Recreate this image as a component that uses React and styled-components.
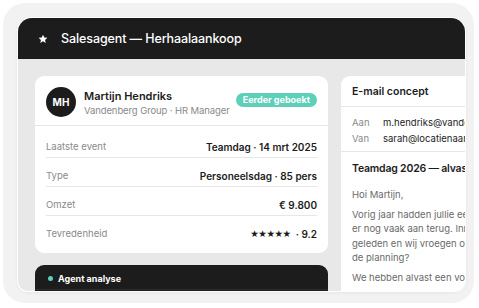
import React from "react";
import styled, { createGlobalStyle } from "styled-components";

const Global = createGlobalStyle`
  html, body { margin: 0; padding: 0; background: #ffffff; }
  body { font-family: Inter, "Noto Sans", sans-serif; -webkit-font-smoothing: antialiased; }
  * { box-sizing: border-box; }
`;

const Frame = styled.div`
  margin: 3px;
  width: 471px;
  height: 300px;
  border-radius: 22px;
  background: #f2f2f2;
  padding: 15px 9px 12px 15px;
  display: flex;
`;

const Window = styled.div`
  flex: 1;
  display: flex;
  flex-direction: column;
  border-radius: 14px 14px 10px 10px;
  overflow: hidden;
  background: #e8e8e8;
  box-shadow: 0 0 0 1px #ffffff, 0 1px 4px rgba(0, 0, 0, 0.08);
`;

const Header = styled.div`
  height: 41px;
  flex: none;
  background: #1c1c1c;
  display: flex;
  align-items: center;
  gap: 13px;
  padding-left: 20px;
  color: #ffffff;
`;

const Title = styled.span`
  font-size: 12.5px;
  font-weight: 500;
  letter-spacing: -0.1px;
`;

const Body = styled.div`
  flex: 1;
  display: grid;
  grid-template-columns: 293px 300px;
  gap: 13px;
  padding: 17px 0 0 17px;
  overflow: hidden;
  min-height: 0;
`;

const Column = styled.div`
  display: flex;
  flex-direction: column;
  gap: 12px;
  min-height: 0;
`;

const Card = styled.div`
  background: #ffffff;
  border-radius: 9px;
  flex: none;
`;

const PersonHead = styled.div`
  display: flex;
  align-items: center;
  gap: 8px;
  padding: 11px 11px 8px 11px;
  border-bottom: 1px solid #e6e6e6;
  white-space: nowrap;
`;

const Avatar = styled.div`
  width: 30px;
  height: 30px;
  flex: none;
  border-radius: 50%;
  background: #1c1c1c;
  color: #fff;
  font-size: 10px;
  font-weight: 700;
  display: flex;
  align-items: center;
  justify-content: center;
`;

const PersonInfo = styled.div`
  flex: 1;
  min-width: 0;
  display: flex;
  flex-direction: column;
  gap: 2px;
`;

const Name = styled.div`
  font-size: 11px;
  font-weight: 600;
  color: #1c1c1c;
`;

const Sub = styled.div`
  font-size: 9.5px;
  letter-spacing: -0.1px;
  color: #8a8a8a;
`;

const Badge = styled.span`
  flex: none;
  background: #5ecfb8;
  color: #ffffff;
  font-size: 9px;
  font-weight: 700;
  border-radius: 8px;
  padding: 0 7px;
  height: 14px;
  line-height: 14px;
  margin-top: -4px;
`;

const Rows = styled.div`
  padding: 3px 11px 8px;
`;

const Row = styled.div`
  display: flex;
  justify-content: space-between;
  align-items: flex-start;
  height: 29px;
  padding-top: 12px;
  line-height: 12px;
  border-bottom: ${(p) => (p.$last ? "none" : "1px solid #e6e6e6")};
`;

const Label = styled.span`
  font-size: 9.5px;
  color: #8a8a8a;
`;

const Value = styled.span`
  font-size: 10px;
  font-weight: 600;
  color: #1c1c1c;
  display: flex;
  align-items: center;
`;

const Stars = styled.span`
  font-family: "DejaVu Sans", sans-serif;
  font-size: 9.5px;
  letter-spacing: -0.4px;
  margin-right: 5px;
`;

const DarkCard = styled.div`
  background: #1c1c1c;
  border-radius: 9px 9px 0 0;
  flex: 1;
  display: flex;
  flex-direction: column;
`;

const DarkHead = styled.div`
  height: 25px;
  flex: none;
  display: flex;
  align-items: center;
  gap: 5px;
  padding: 2px 13px 0;
  color: #ffffff;
  font-size: 9px;
  font-weight: 700;
  border-bottom: 1px solid #2e2e2e;
`;

const Dot = styled.span`
  width: 5px;
  height: 5px;
  border-radius: 50%;
  background: #5ecfb8;
`;

const MailCard = styled.div`
  background: #ffffff;
  border-radius: 9px 9px 0 0;
  white-space: nowrap;
  overflow: hidden;
`;

const MailHead = styled.div`
  height: 31px;
  display: flex;
  align-items: center;
  padding: 0 11px;
  font-size: 10.5px;
  font-weight: 600;
  color: #1c1c1c;
  border-bottom: 1px solid #e6e6e6;
`;

const Meta = styled.div`
  padding: 7px 11px 5px;
  border-bottom: 1px solid #e6e6e6;
`;

const MetaLine = styled.div`
  display: flex;
  gap: 9px;
  height: 16px;
  align-items: center;
  font-size: 9.5px;
`;

const MetaKey = styled.span`
  width: 22px;
  flex: none;
  color: #8a8a8a;
`;

const MetaVal = styled.span`
  flex: none;
  color: #1c1c1c;
`;

const MailBody = styled.div`
  padding: 10px 11px 0;
`;

const Subject = styled.div`
  font-size: 10.5px;
  font-weight: 600;
  letter-spacing: -0.2px;
  color: #1c1c1c;
  margin-bottom: 13px;
`;

const Para = styled.p`
  margin: 0 0 5px;
  font-size: 9.5px;
  line-height: 14.5px;
  color: #6a6a6a;
`;

const StarIcon = () => (
  <svg width="10" height="10" viewBox="0 0 24 24" fill="#ffffff">
    <path d="M12 1.5l3.1 6.9 7.4.7-5.6 5 1.7 7.4L12 17.6l-6.6 3.9 1.7-7.4-5.6-5 7.4-.7z" />
  </svg>
);

const rows = [
  ["Laatste event", "Teamdag · 14 mrt 2025"],
  ["Type", "Personeelsdag · 85 pers"],
  ["Omzet", "€ 9.800"],
];

export default function App() {
  return (
    <>
      <Global />
      <Frame>
        <Window>
          <Header>
            <StarIcon />
            <Title>Salesagent — Herhaalaankoop</Title>
          </Header>
          <Body>
            <Column>
              <Card>
                <PersonHead>
                  <Avatar>MH</Avatar>
                  <PersonInfo>
                    <Name>Martijn Hendriks</Name>
                    <Sub>Vandenberg Group · HR Manager</Sub>
                  </PersonInfo>
                  <Badge>Eerder geboekt</Badge>
                </PersonHead>
                <Rows>
                  {rows.map(([l, v]) => (
                    <Row key={l}>
                      <Label>{l}</Label>
                      <Value>{v}</Value>
                    </Row>
                  ))}
                  <Row $last>
                    <Label>Tevredenheid</Label>
                    <Value>
                      <Stars>★★★★★</Stars>· 9.2
                    </Value>
                  </Row>
                </Rows>
              </Card>
              <DarkCard>
                <DarkHead>
                  <Dot />
                  Agent analyse
                </DarkHead>
              </DarkCard>
            </Column>
            <MailCard>
              <MailHead>E-mail concept</MailHead>
              <Meta>
                <MetaLine>
                  <MetaKey>Aan</MetaKey>
                  <MetaVal>m.hendriks@vandenberggroup.nl</MetaVal>
                </MetaLine>
                <MetaLine>
                  <MetaKey>Van</MetaKey>
                  <MetaVal>sarah@locatienaam.nl</MetaVal>
                </MetaLine>
              </Meta>
              <MailBody>
                <Subject>Teamdag 2026 — alvast een datum vastleggen?</Subject>
                <Para>Hoi Martijn,</Para>
                <Para>
                  Vorig jaar hadden jullie een geweldige teamdag bij ons, we denken
                  <br />
                  er nog vaak aan terug. Inmiddels is het bijna een jaar
                  <br />
                  geleden en wij vroegen ons af: staat 2026 al op
                  <br />
                  de planning?
                </Para>
                <Para>We hebben alvast een voorstel voor jullie klaargezet.</Para>
              </MailBody>
            </MailCard>
          </Body>
        </Window>
      </Frame>
    </>
  );
}
